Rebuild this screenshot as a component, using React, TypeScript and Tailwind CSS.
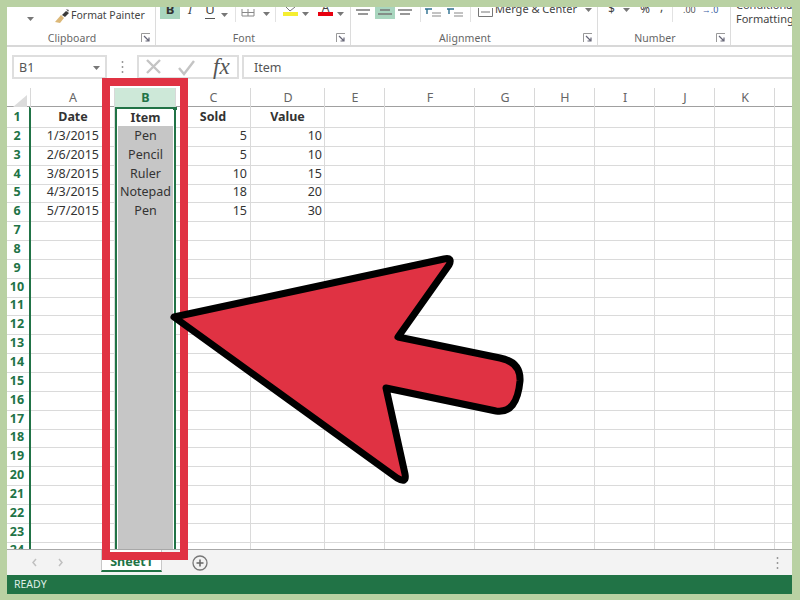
import React from 'react';

const GRID = 'grid grid-cols-[24px_84px_61px_75px_74px_60px_90px_60px_60px_60px_60px_60px_17px]';
const FONT = "font-['Noto_Sans',sans-serif]";

const rows: Record<number, string[]> = {
  1: ['Date', 'Item', 'Sold', 'Value'],
  2: ['1/3/2015', 'Pen', '5', '10'],
  3: ['2/6/2015', 'Pencil', '5', '10'],
  4: ['3/8/2015', 'Ruler', '10', '15'],
  5: ['4/3/2015', 'Notepad', '18', '20'],
  6: ['5/7/2015', 'Pen', '15', '30'],
};

const columns = ['A', 'C', 'D', 'E', 'F', 'G', 'H', 'I', 'J', 'K'];

const Caret = ({ className = '' }: { className?: string }) => (
  <svg width="7" height="4" viewBox="0 0 7 4" className={className}>
    <path d="M0 0h7L3.5 4z" fill="#777" />
  </svg>
);

const Launcher = () => (
  <svg width="10" height="10" viewBox="0 0 10 10">
    <path d="M0.5 9V0.5H9" fill="none" stroke="#999" />
    <path d="M3 3l5 5M8 4.5V8H4.5" fill="none" stroke="#667" strokeWidth="1.2" />
  </svg>
);

const Lines = ({ short = false }: { short?: boolean }) => (
  <svg width="16" height="12" viewBox="0 0 16 12">
    <path d={short ? 'M3 3h10M1 7h14' : 'M1 3h14M3 7h10'} stroke="#777" strokeWidth="1.3" />
  </svg>
);

const Indent = () => (
  <svg width="18" height="12" viewBox="0 0 18 12">
    <path d="M1 2h7M3 2v5" stroke="#2d6f8f" strokeWidth="1.4" fill="none" />
    <path d="M8 6h9M8 9h9" stroke="#888" strokeWidth="1.2" />
  </svg>
);

const Group = ({ label, width, children }: { label: string; width: string; children: React.ReactNode }) => (
  <div className={`${width} shrink-0 flex flex-col border-r border-[#dcdcdc]`}>
    <div className="h-[24px] flex items-start">{children}</div>
    <div className="h-[12px] flex items-center text-[10.5px] leading-[14px] pt-px text-[#666] tracking-[0.1px]">
      <span className="flex-1 text-center">{label}</span>
      <span className="w-[18px] flex justify-center">
        <Launcher />
      </span>
    </div>
  </div>
);

const Ribbon = () => (
  <div className="h-[40px] flex shrink-0 border-b-2 border-[#d8d8d8] overflow-hidden">
    <Group label="Clipboard" width="w-[149px]">
      <div className="w-[47px] h-[24px] flex justify-center pt-[10px]">
        <Caret className="ml-[-1px]" />
      </div>
      <svg width="17" height="16" viewBox="0 0 17 16" className="mt-[1px]">
        <path d="M1 14L7 7l3 3-4 5z" fill="#dcb878" />
        <path d="M8 7l4-4 3 2-4 4z" fill="#3a3a3a" />
        <path d="M12 1l3 1-1 2z" fill="#666" />
      </svg>
      <span className="text-[10.5px] leading-[16px] text-[#444] whitespace-nowrap">Format Painter</span>
    </Group>
    <Group label="Font" width="w-[195px]">
      <div className="ml-[4px] w-[20px] h-[12px] bg-[#a9d6bf] text-center text-[13px] font-bold leading-[4px] text-[#333]">B</div>
      <div className="ml-[4px] w-[12px] text-center text-[13px] italic leading-[4px] text-[#444]">I</div>
      <div className="ml-[9px] w-[10px] h-[12px] text-center text-[13px] leading-[4px] text-[#444] border-b border-[#555]">U</div>
      <Caret className="ml-[6px] mt-[6px]" />
      <div className="ml-[7px] w-px h-[15px] bg-[#e2e2e2]" />
      <svg width="14" height="10" viewBox="0 0 14 10" className="ml-[5px] mt-[2px]">
        <path d="M1 0v7h12V0M1 3.5h12M7 0v7" fill="none" stroke="#888" />
      </svg>
      <Caret className="ml-[8px] mt-[5px]" />
      <div className="ml-[5px] w-px h-[15px] bg-[#e2e2e2]" />
      <div className="ml-[7px] w-[15px] h-[9px] border-b-[4px] border-[#f5ee30]">
        <svg width="15" height="5" viewBox="0 0 15 5">
          <path d="M3 0l4 4 5-4" fill="none" stroke="#777" />
        </svg>
      </div>
      <Caret className="ml-[4px] mt-[5px]" />
      <div className="ml-[9px] w-[15px] h-[9px] border-b-[4px] border-[#e8000f] text-center text-[12px] leading-[2px] text-[#444]">A</div>
      <Caret className="ml-[4px] mt-[5px]" />
    </Group>
    <Group label="Alignment" width="w-[247px]">
      <div className="ml-[4px] w-[16px]"><Lines /></div>
      <div className="ml-[4px] w-[20px] h-[12px] bg-[#a9d6bf] flex justify-center"><Lines short /></div>
      <div className="ml-[2px] w-[16px]"><Lines /></div>
      <div className="ml-[7px] w-px h-[15px] bg-[#e2e2e2]" />
      <div className="ml-[3px]"><Indent /></div>
      <div className="ml-[4px]"><Indent /></div>
      <div className="ml-[6px] w-px h-[15px] bg-[#e2e2e2]" />
      <svg width="15" height="11" viewBox="0 0 15 11" className="ml-[7px] mt-[1px]">
        <path d="M.5 0v8.5h14V0M3 4h9" fill="none" stroke="#777" />
      </svg>
      <span className="ml-[2px] w-[84px] text-[11px] leading-[4px] text-[#444] whitespace-nowrap">Merge &amp; Center</span>
      <Caret className="ml-[6px] mt-[1px]" />
    </Group>
    <Group label="Number" width="w-[133px]">
      <span className="ml-[10px] w-[8px] text-[12px] leading-[4px] text-[#444]">$</span>
      <Caret className="ml-[7px] mt-[1px]" />
      <span className="ml-[10px] w-[12px] text-[12px] leading-[4px] text-[#444]">%</span>
      <span className="ml-[8px] w-[6px] text-[12px] leading-[0px] text-[#444]">,</span>
      <div className="ml-[6px] w-px h-[15px] bg-[#e2e2e2]" />
      <span className="ml-[10px] text-[9px] leading-[5px] text-[#555] whitespace-nowrap">.00</span>
      <span className="ml-[6px] text-[9px] leading-[5px] text-[#3a5f9f] whitespace-nowrap">→.0</span>
    </Group>
    <div className="flex-1 pl-[5px] -mt-[9px] text-[11px] leading-[14px] text-[#444] whitespace-nowrap">
      <div>Conditional</div>
      <div>Formatting</div>
    </div>
  </div>
);

const FormulaBar = () => (
  <div className="mt-[8px] h-[24px] flex shrink-0 items-stretch">
    <div className="ml-[5px] w-[95px] border-2 border-[#dedede] flex items-center justify-between pl-[5px] pr-[5px] pt-[2px] text-[12.5px] text-[#555]">
      <span>B1</span>
      <Caret />
    </div>
    <div className="w-[30px] flex items-center justify-center">
      <svg width="3" height="12" viewBox="0 0 3 12">
        <path d="M1.5 0v2M1.5 5v2M1.5 10v2" stroke="#999" strokeWidth="1.5" />
      </svg>
    </div>
    <div className="w-[102px] border-2 border-[#dedede] flex items-center">
      <svg width="64" height="20" viewBox="0 0 64 20" className="ml-[6px]">
        <path d="M2 3l13 13M15 3L2 16" stroke="#c4c4c4" strokeWidth="2.4" />
        <path d="M34 11l5 6 10-13" fill="none" stroke="#c4c4c4" strokeWidth="2.4" />
      </svg>
      <span className="ml-[4px] font-['Liberation_Serif',serif] italic text-[23px] leading-[20px] text-[#555]">fx</span>
    </div>
    <div className="ml-[3px] flex-1 border-y-2 border-l-2 border-[#dedede] flex items-center pl-[10px] pt-[2px] text-[12.5px] text-[#555]">Item</div>
  </div>
);

const ColumnHeaders = () => (
  <div className={`${GRID} mt-[9px] h-[19px] shrink-0 border-b border-[#a0a0a0] text-[12.5px] text-[#666] leading-[20px] text-center`}>
    <div className="relative border-r border-[#d8d8d8]">
      <svg width="14" height="12" viewBox="0 0 14 12" className="absolute right-[3px] bottom-[1px]">
        <path d="M14 0v12H0z" fill="#dcdcdc" />
      </svg>
    </div>
    <div className="pl-px border-r border-[#d8d8d8]">A</div>
    <div className="pl-px bg-[#cde8d8] text-[#217346] font-bold border-r border-[#d8d8d8]">B</div>
    {columns.slice(1).map(c => (
      <div key={c} className="pl-px border-r border-[#d8d8d8]">{c}</div>
    ))}
    <div />
  </div>
);

const Row = ({ n }: { n: number }) => {
  const data = rows[n] ?? ['', '', '', ''];
  const head = n === 1;
  const line = 'border-r border-b border-[#dadada]';
  return (
    <div className={`${GRID} h-[18.85px] text-[12.5px] leading-[20px] text-[#333]`}>
      <div className="border-r-2 border-b border-r-[#217346] border-b-[#dadada] text-center pr-[2px] font-bold text-[#217346]">{n}</div>
      <div className={`${line} ${head ? 'text-center font-bold pl-px' : 'text-right pr-[15px]'}`}>{data[0]}</div>
      <div className={`relative border-x-2 border-[#217346] ${head ? 'border-t-2 bg-white' : 'px-px'}`}>
        {head ? (
          <div className="text-center font-bold leading-[18px]">{data[1]}</div>
        ) : (
          <div className="h-full bg-[#c6c6c6] border-b border-[#b4b4b4] text-center">{data[1]}</div>
        )}
        {head && <div className="absolute -top-[3px] -right-[3px] w-[4px] h-[4px] bg-[#217346]" />}
      </div>
      <div className={`${line} ${head ? 'text-center font-bold' : 'text-right pr-[3px]'}`}>{data[2]}</div>
      <div className={`${line} ${head ? 'text-center font-bold' : 'text-right pr-[2px]'}`}>{data[3]}</div>
      {columns.slice(3).map(c => (
        <div key={c} className={line} />
      ))}
      <div className="border-b border-[#dadada]" />
    </div>
  );
};

const SheetTabs = () => (
  <div className="h-[26px] shrink-0 flex items-start bg-[#f3f3f3] border-t border-[#a8a8a8]">
    <svg width="40" height="26" viewBox="0 0 40 26" className="ml-[22px]">
      <path d="M7 9l-3 3.5L7 16M30 9l3 3.5L30 16" fill="none" stroke="#c0c0c0" strokeWidth="1.5" />
    </svg>
    <div className="ml-[32px] w-[61px] h-[22px] bg-white border-x border-b-2 border-x-[#c8c8c8] border-b-[#217346] text-center text-[12.5px] font-bold text-[#217346] leading-[24px]">Sheet1</div>
    <svg width="16" height="16" viewBox="0 0 16 16" className="ml-[30px] mt-[5px]">
      <circle cx="8" cy="8" r="7" fill="none" stroke="#777" strokeWidth="1.3" />
      <path d="M8 4.5v7M4.5 8h7" stroke="#666" strokeWidth="1.5" />
    </svg>
    <svg width="3" height="12" viewBox="0 0 3 12" className="ml-auto mr-[13px] mt-[7px]">
      <path d="M1.5 0v2M1.5 5v2M1.5 10v2" stroke="#999" strokeWidth="1.5" />
    </svg>
  </div>
);

export default function App() {
  return (
    <div className={`w-[800px] h-[600px] bg-[#b9d1a3] pt-[7px] pr-[8px] pb-[6px] pl-[7px] overflow-hidden ${FONT}`}>
      <div className="relative w-full h-full bg-white flex flex-col">
        <Ribbon />
        <FormulaBar />
        <ColumnHeaders />
        <div className="flex-1 min-h-0 overflow-hidden">
          {Array.from({ length: 24 }, (_, i) => (
            <Row key={i} n={i + 1} />
          ))}
        </div>
        <SheetTabs />
        <div className="h-[19px] shrink-0 bg-[#217346] text-[10.5px] leading-[19px] text-[#dfeee5] pl-[7px]">READY</div>

        {/* red frame around column B */}
        <div className="absolute left-[95px] top-[71px] w-[86px] h-[482px] border-[8px] border-[#e03243]" />

        {/* big arrow */}
        <svg width="800" height="600" viewBox="0 0 800 600" className="absolute -left-[7px] -top-[7px] pointer-events-none">
          <path
            d="M174 317L444 259Q453 257 449 265L398 337L500 358Q521 362 520 381Q517 414 496 411L386 388L405 474Q407 484 397 478Z"
            fill="#e03243"
            stroke="#000"
            strokeWidth="7"
            strokeLinejoin="round"
          />
        </svg>
      </div>
    </div>
  );
}
